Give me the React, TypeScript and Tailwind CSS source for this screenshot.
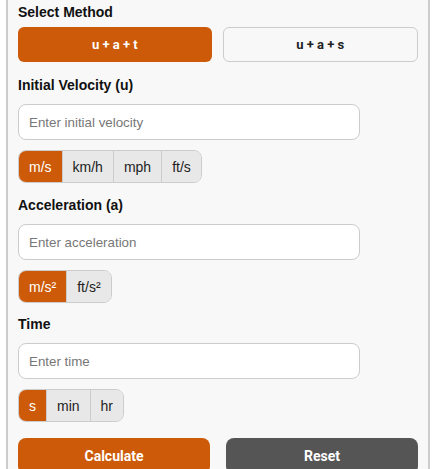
import React from "react";

const Units = ({ items }: { items: string[] }) => (
  <div className="flex w-max rounded-[8px] border border-[#cccccc] overflow-hidden mt-[10px]">
    {items.map((u, i) => (
      <button
        key={u}
        className={
          (i === 0 ? "bg-[#cc5a08] text-white " : "bg-[#e8e8e8] text-[#222] ") +
          (i > 0 ? "border-l border-[#cccccc] " : "") +
          "h-[31px] px-[10px] text-[14px] leading-none font-['Liberation_Sans',Arial,sans-serif]"
        }
      >
        {u}
      </button>
    ))}
  </div>
);

const Label = ({ children, mt }: { children: React.ReactNode; mt: string }) => (
  <div className={"text-[14px] font-bold text-[#111] leading-[17px] " + mt}>{children}</div>
);

const Input = ({ ph }: { ph: string }) => (
  <input
    placeholder={ph}
    className="mt-[10px] block w-[342px] h-[36px] rounded-[8px] border border-[#cccccc] bg-white px-[10px] text-[13.33px] placeholder:text-[#777] outline-none font-['Liberation_Sans',Arial,sans-serif]"
  />
);

export default function App() {
  return (
    <div className="w-[432px] h-[469px] bg-white overflow-hidden font-['Liberation_Sans',Arial,sans-serif]">
      <div className="ml-[6px] w-[424px] h-[520px] mt-[-10px] border-x-2 border-[#cccccc] bg-[#f8f8f8] px-[10px] pt-[14px]">
        <Label mt="">Select Method</Label>
        <div className="flex gap-[11px] mt-[6px]">
          <button className="flex-1 h-[35px] rounded-[6px] bg-[#cc5a08] text-white text-[13px] font-bold font-['Roboto',sans-serif]">
            u + a + t
          </button>
          <button className="flex-1 h-[35px] rounded-[6px] border border-[#cccccc] bg-[#f8f8f8] text-[#222] text-[13px] font-bold font-['Roboto',sans-serif]">
            u + a + s
          </button>
        </div>

        <Label mt="mt-[15px]">Initial Velocity (u)</Label>
        <Input ph="Enter initial velocity" />
        <Units items={["m/s", "km/h", "mph", "ft/s"]} />

        <Label mt="mt-[14px]">Acceleration (a)</Label>
        <Input ph="Enter acceleration" />
        <Units items={["m/s²", "ft/s²"]} />

        <Label mt="mt-[13px]">Time</Label>
        <Input ph="Enter time" />
        <Units items={["s", "min", "hr"]} />

        <div className="flex gap-[16px] mt-[16px]">
          <button className="flex-1 h-[36px] rounded-[8px] bg-[#cc5a08] text-white text-[14px] font-bold font-['Roboto',sans-serif]">
            Calculate
          </button>
          <button className="flex-1 h-[36px] rounded-[8px] bg-[#555555] text-white text-[14px] font-bold font-['Roboto',sans-serif]">
            Reset
          </button>
        </div>
      </div>
    </div>
  );
}
